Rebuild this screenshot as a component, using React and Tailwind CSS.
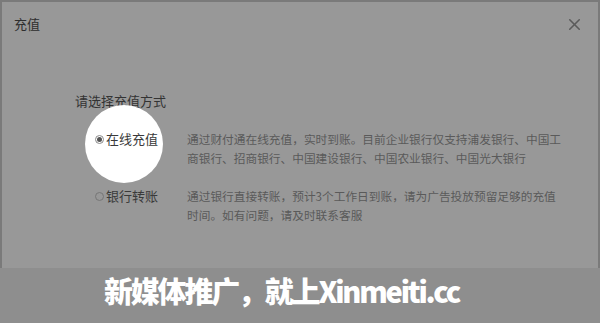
import { X } from 'lucide-react';

const cjk = { fontFamily: '"Noto Sans CJK SC", "Noto Sans", sans-serif' };

const options = [
  {
    label: '在线充值',
    checked: true,
    desc: '通过财付通在线充值，实时到账。目前企业银行仅支持浦发银行、中国工商银行、招商银行、中国建设银行、中国农业银行、中国光大银行',
  },
  {
    label: '银行转账',
    checked: false,
    desc: '通过银行直接转账，预计3个工作日到账，请为广告投放预留足够的充值时间。如有问题，请及时联系客服',
  },
];

export default function App() {
  return (
    <div className="w-[600px] h-[323px] bg-[#8e8e8e] flex flex-col overflow-hidden" style={cjk}>
      {/* 弹窗 */}
      <div className="h-[268px] bg-[#989898] border-t-2 border-l-2 border-r-2 border-[#7a7a7a] flex flex-col">
        <div className="h-[44px] flex items-center justify-between pl-[12px] pr-[14px]">
          <span className="text-[13px] text-[#2e2e2e]">充值</span>
          <X size={19} strokeWidth={2} className="text-[#5a5a5a]" />
        </div>

        <div className="pl-[73px] pt-[45px]">
          <p className="text-[13px] leading-[20px] text-[#333333]">请选择充值方式</p>

          <div className="mt-[18px] flex flex-col gap-[19px]">
            {options.map((o) => (
              <div key={o.label} className="flex">
                <div className="relative w-[112px] pl-[20px] h-[20px] flex items-center">
                  {o.checked && (
                    <div className="absolute left-[10px] top-[-24px] w-[78px] h-[78px] rounded-full bg-white" />
                  )}
                  <span className="relative flex items-center gap-[2px] text-[13px] text-[#3a3a3a]">
                    <span
                      className={`w-[9px] h-[9px] rounded-full border flex items-center justify-center ${
                        o.checked ? 'bg-white border-[#8a8a8a]' : 'bg-transparent border-[#767676]'
                      }`}
                    >
                      {o.checked && <span className="w-[5px] h-[5px] rounded-full bg-[#555555]" />}
                    </span>
                    {o.label}
                  </span>
                </div>
                <p className="w-[380px] text-[11.7px] leading-[19px] text-[#5a5a5a]">{o.desc}</p>
              </div>
            ))}
          </div>
        </div>
      </div>

      {/* 水印 */}
      <div className="flex-1 flex items-center pl-[104px] pb-[10px]">
        <span className="text-[29px] leading-none font-black text-white tracking-[-2.2px]">
          新媒体推广，就上Xinmeiti.cc
        </span>
      </div>
    </div>
  );
}
